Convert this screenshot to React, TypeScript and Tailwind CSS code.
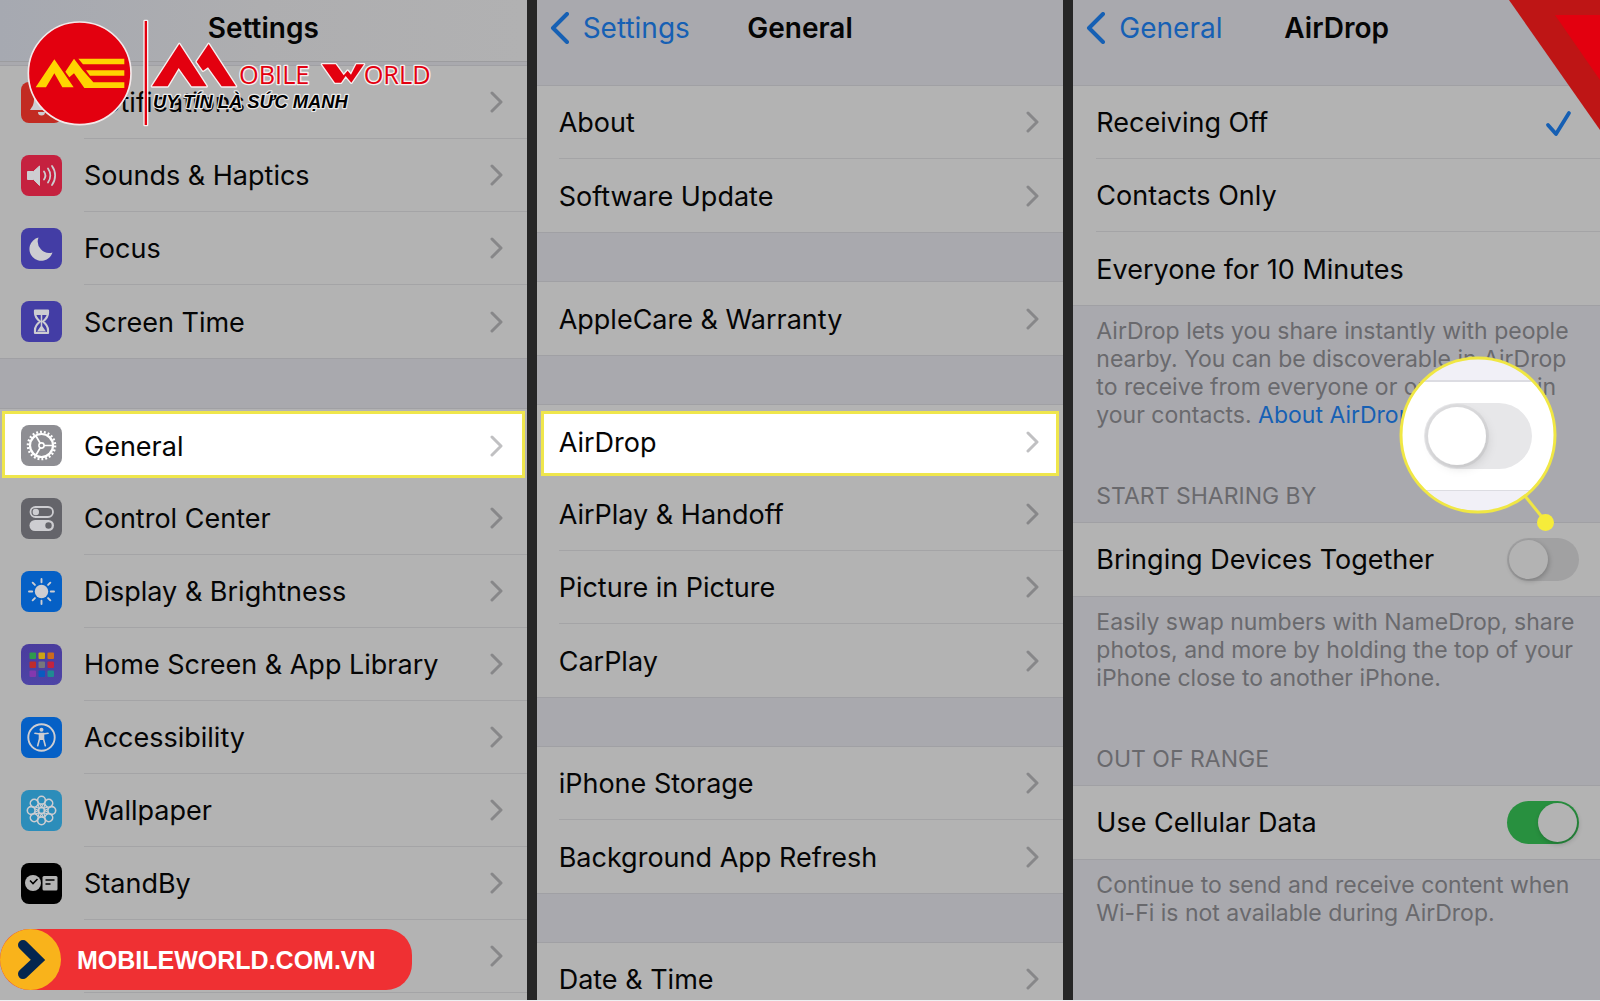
import { useState } from 'react'
import type { ReactNode } from 'react'

const GLYPH = '#cdcdd1'

function IconTile({ children, className }: { children?: ReactNode; className: string }) {
  return (
    <svg viewBox="0 0 41 41" className={`size-[41px] shrink-0 rounded-lg ${className}`} aria-hidden="true">
      {children}
    </svg>
  )
}

const BellIcon = () => (
  <IconTile className="bg-[#c22b22]">
    <path d="M20.5 8c-5 0-7.500 4-7.500 9 0 6-2 8-4 11h23c-2-3-4-5-4-11 0-5-2.500-9-7.500-9z" fill={GLYPH} />
    <path d="M17 30a3.500 3.500 0 0 0 7 0z" fill={GLYPH} />
  </IconTile>
)

const SoundsIcon = () => (
  <IconTile className="bg-[#c5213f]">
    <path d="M6.500 16.500h6L18.500 11v19.500l-6-6h-6z" fill={GLYPH} stroke={GLYPH} strokeLinejoin="round" />
    <g fill="none" stroke={GLYPH} strokeWidth="1.800" strokeLinecap="round">
      <path d="M23 16.500a7 7 0 0 1 0 8" />
      <path d="M27 13.500a12 12 0 0 1 0 14" />
      <path d="M31 11a16 16 0 0 1 0 19" />
    </g>
  </IconTile>
)

const FocusIcon = () => (
  <IconTile className="bg-[#433da5]">
    <path d="M17.500 9.500A11.800 11.800 0 1 0 31.500 24.500A11.500 11.500 0 0 1 17.500 9.500z" fill={GLYPH} />
  </IconTile>
)

const ScreenTimeIcon = () => (
  <IconTile className="bg-[#433da5]">
    <path
      d="M14 9.500h13v2.500c0 4-2 6-5 8.500 3 2.500 5 4.500 5 8.500v3H14v-3c0-4 2-6 5-8.500-3-2.500-5-4.500-5-8.500z"
      fill="none"
      stroke={GLYPH}
      strokeWidth="2.200"
      strokeLinejoin="round"
    />
    <path d="M14 9h13v5H14zM20.500 24l4.500 6.500h-9z" fill={GLYPH} />
    <path d="M20.500 14v11" stroke={GLYPH} strokeWidth="1.500" />
  </IconTile>
)

const GeneralIcon = () => (
  <IconTile className="bg-[#8e8e93]">
    <g fill="none" stroke="#fff">
      <circle cx="20.500" cy="20.500" r="11.500" strokeWidth="2.200" />
      <circle cx="20.500" cy="20.500" r="13.600" strokeWidth="2.400" strokeDasharray="1.900 1.987" />
      <circle cx="20.500" cy="20.500" r="2.600" strokeWidth="1.600" />
      <path d="M23 20.500h9M19.200 18.200L14.700 10.500M19.200 22.800l-4.500 7.700" strokeWidth="1.700" />
    </g>
  </IconTile>
)

const ControlIcon = () => (
  <IconTile className="bg-[#64646a]">
    <rect x="9.500" y="9" width="22.500" height="10" rx="5" fill="none" stroke={GLYPH} strokeWidth="1.800" />
    <circle cx="14.800" cy="14" r="3.200" fill={GLYPH} />
    <rect x="8.500" y="22" width="24.500" height="11" rx="5.500" fill={GLYPH} />
    <circle cx="27.500" cy="27.500" r="3.200" fill="#64646a" />
  </IconTile>
)

const DisplayIcon = () => (
  <IconTile className="bg-[#0560c6]">
    <circle cx="20.500" cy="20.500" r="6.700" fill={GLYPH} />
    <g stroke={GLYPH} strokeWidth="1.900" strokeLinecap="round">
      {[0, 45, 90, 135, 180, 225, 270, 315].map(angle => (
        <path key={angle} d="M20.500 11.200V8" transform={`rotate(${angle} 20.500 20.500)`} />
      ))}
    </g>
  </IconTile>
)

const homeTiles = ['#2f9a4d', '#cca314', '#cb6a1d', '#bf2c2c', '#77777c', '#c2233f', '#8438ae', '#0a5bc0', '#1f8b92']

const HomeIcon = () => (
  <IconTile className="bg-linear-to-b from-[#4a3c9d] to-[#4d44a6]">
    {homeTiles.map((fill, i) => (
      <rect key={fill} x={8.5 + (i % 3) * 9} y={8.5 + Math.floor(i / 3) * 9} width="6.500" height="6.500" rx="1" fill={fill} />
    ))}
  </IconTile>
)

const AccessibilityIcon = () => (
  <IconTile className="bg-[#0560c6]">
    <circle cx="20.500" cy="20.500" r="13.200" fill="none" stroke={GLYPH} strokeWidth="1.900" />
    <circle cx="20.500" cy="12.800" r="2" fill={GLYPH} />
    <path d="M14 16.300q6.500 1.400 13 0" fill="none" stroke={GLYPH} strokeWidth="1.600" strokeLinecap="round" />
    <path d="M18.500 16.500h4v5.500l1.800 6.800M18.500 16.500v5.500l-1.800 6.800" fill="none" stroke={GLYPH} strokeWidth="1.600" strokeLinecap="round" />
    <path d="M18.200 16.500h4.600v6.500h-4.600z" fill={GLYPH} />
  </IconTile>
)

const WallpaperIcon = () => (
  <IconTile className="bg-[#2c8dba]">
    <g fill="none" stroke={GLYPH} strokeWidth="1.600">
      {[0, 45, 90, 135, 180, 225, 270, 315].map(angle => (
        <g key={angle} transform={`rotate(${angle} 20.500 20.500)`}>
          <circle cx="20.500" cy="10.200" r="3.900" />
          <path d="M18.500 13.500l2 4 2-4" strokeWidth="1.200" />
        </g>
      ))}
      <circle cx="20.500" cy="20.500" r="3" />
    </g>
  </IconTile>
)

const StandByIcon = () => (
  <IconTile className="bg-black">
    <circle cx="12" cy="20" r="8" fill="#b4b4b4" />
    <path d="M9 17.500l3 3 4.500-4.500" fill="none" stroke="#000" strokeWidth="1.600" />
    <rect x="21.500" y="13" width="15" height="14.500" rx="1.500" fill="#b4b4b4" />
    <path d="M24.500 17h9M24.500 21h5" stroke="#000" strokeWidth="1.500" />
  </IconTile>
)

function Chevron({ bright = false }: { bright?: boolean }) {
  return (
    <svg viewBox="0 0 13 22" className="h-[22px] w-[13px] shrink-0" aria-hidden="true">
      <path
        d="M2 2l9 9-9 9"
        fill="none"
        stroke={bright ? '#c0c0c2' : '#878789'}
        strokeWidth="3"
        strokeLinecap="round"
        strokeLinejoin="round"
      />
    </svg>
  )
}

type RowProps = {
  label: string
  icon?: ReactNode
  // position of the bright call-out box inside the row
  highlight?: string
  last?: boolean
}

function Row({ label, icon, highlight, last }: RowProps) {
  return (
    <li className="relative">
      {highlight && <span className={`absolute border-3 border-[#efe64c] bg-white ${highlight}`} />}
      <button type="button" className={`relative flex h-[73px] w-full items-center gap-[22px] text-left ${icon ? 'pl-[21px]' : 'pl-[22px]'}`}>
        {icon}
        <span
          className={`flex h-full flex-1 items-center justify-between pr-6 ${
            last || highlight ? '' : 'border-b border-[#a4a4a6]'
          }`}
        >
          <span className="pt-0.5">{label}</span>
          <Chevron bright={!!highlight} />
        </span>
      </button>
    </li>
  )
}

function Panel({ children }: { children: ReactNode }) {
  return <div className="relative bg-[#b3b3b3] shadow-[0_1px_#a0a0a4,0_-1px_#a0a0a4]">{children}</div>
}

function Group({ children }: { children: ReactNode }) {
  return (
    <Panel>
      <ul>{children}</ul>
    </Panel>
  )
}

function NavBar({ back, title }: { back?: string; title: string }) {
  return (
    <header className="grid h-14 grid-cols-[1fr_auto_1fr] items-center text-[28px]">
      <div>
        {back && (
          <a href="#" className="flex items-center gap-3.5 pl-[13px] text-[#1660b4]">
            <svg viewBox="0 0 19 32" className="h-8 w-[19px]" aria-hidden="true">
              <path d="M17 2L3 16l14 14" fill="none" stroke="currentColor" strokeWidth="4" strokeLinecap="round" strokeLinejoin="round" />
            </svg>
            {back}
          </a>
        )}
      </div>
      <h1 className="font-semibold">{title}</h1>
      <div />
    </header>
  )
}

function SettingsScreen() {
  return (
    <section className="bg-[#a9a9ae]">
      <div className="h-[62px] border-b border-[#9c9c9f] bg-linear-to-r from-[#a6a9b1] via-[#aeaeb0] to-[#b1b1b2]">
        <NavBar title="Settings" />
      </div>
      <div className="flex flex-col gap-[51px] pt-1">
        <Group>
          <Row icon={<BellIcon />} label="Notifications" />
          <Row icon={<SoundsIcon />} label="Sounds & Haptics" />
          <Row icon={<FocusIcon />} label="Focus" />
          <Row icon={<ScreenTimeIcon />} label="Screen Time" last />
        </Group>
        <Group>
          <Row icon={<GeneralIcon />} label="General" highlight="inset-x-0.5 top-0.5 bottom-1" />
          <Row icon={<ControlIcon />} label="Control Center" />
          <Row icon={<DisplayIcon />} label="Display & Brightness" />
          <Row icon={<HomeIcon />} label="Home Screen & App Library" />
          <Row icon={<AccessibilityIcon />} label="Accessibility" />
          <Row icon={<WallpaperIcon />} label="Wallpaper" />
          <Row icon={<StandByIcon />} label="StandBy" />
          <Row icon={<IconTile className="bg-[#0560c6]" />} label="" />
          <Row label="" last />
        </Group>
      </div>
    </section>
  )
}

function GeneralScreen() {
  return (
    <section className="bg-[#a9a9ae]">
      <NavBar back="Settings" title="General" />
      <div className="flex flex-col gap-[50px] pt-[30px]">
        <Group>
          <Row label="About" />
          <Row label="Software Update" last />
        </Group>
        <Group>
          <Row label="AppleCare & Warranty" last />
        </Group>
        <Group>
          <Row label="AirDrop" highlight="inset-x-1 top-1.5 bottom-0.5" />
          <Row label="AirPlay & Handoff" />
          <Row label="Picture in Picture" />
          <Row label="CarPlay" last />
        </Group>
        <Group>
          <Row label="iPhone Storage" />
          <Row label="Background App Refresh" last />
        </Group>
        <Group>
          <Row label="Date & Time" />
        </Group>
      </div>
    </section>
  )
}

function Toggle({ label, checked, onChange }: { label: string; checked: boolean; onChange: (v: boolean) => void }) {
  return (
    <label className="flex h-[73px] items-center justify-between pr-[21px] pl-[23px]">
      {label}
      <input
        type="checkbox"
        checked={checked}
        onChange={e => onChange(e.target.checked)}
        className="flex h-[43px] w-[72px] appearance-none items-center rounded-full bg-[#a1a1a2] px-[2px] before:size-[39px] before:rounded-full before:bg-[#b3b3b3] before:shadow-[1px_2px_5px_#00000038] checked:justify-end checked:bg-[#28903f]"
      />
    </label>
  )
}

const receivingOptions = ['Receiving Off', 'Contacts Only', 'Everyone for 10 Minutes']

function Note({ children }: { children: ReactNode }) {
  return <p className="pt-3 pr-6 pl-[23px] text-[23px]/[28px] text-[#69696d]">{children}</p>
}

function SectionTitle({ children }: { children: ReactNode }) {
  return <h2 className="pt-[53px] pb-[13px] pl-[23px] text-[23px]/[28px] text-[#69696d]">{children}</h2>
}

// Zoomed view of the off switch, with a pointer down to the real one
function Magnifier() {
  return (
    <svg viewBox="0 0 164 180" className="absolute right-[41px] bottom-[63px] h-[180px] w-[164px]" aria-hidden="true">
      <defs>
        <clipPath id="lens">
          <circle cx="83" cy="82" r="77" />
        </clipPath>
        <filter id="knob" x="-30%" y="-30%" width="160%" height="160%">
          <feDropShadow dx="3" dy="4" stdDeviation="4" floodOpacity="0.1" />
        </filter>
      </defs>
      <path d="M130 143l21 26" stroke="#efe544" strokeWidth="3" />
      <circle cx="150.500" cy="169.500" r="8.500" fill="#f6ec3a" />
      <g clipPath="url(#lens)">
        <rect width="164" height="164" fill="#f1f0f7" />
        <rect y="27" width="164" height="111" fill="#dcdce2" />
        <rect y="29" width="164" height="108" fill="#fff" />
        <rect x="29" y="50" width="108" height="66" rx="33" fill="#e7e7e9" />
        <circle cx="62" cy="83" r="32" fill="#dcdcde" />
        <circle cx="62" cy="83" r="29" fill="#fff" filter="url(#knob)" />
      </g>
      <circle cx="83" cy="82" r="77" fill="none" stroke="#f0e744" strokeWidth="3" />
    </svg>
  )
}

function AirDropScreen() {
  const [receiving, setReceiving] = useState(receivingOptions[0])
  const [bringing, setBringing] = useState(false)
  const [cellular, setCellular] = useState(true)

  return (
    <section className="bg-[#a9a9ae]">
      <NavBar back="General" title="AirDrop" />
      <div className="pt-[30px]">
        <Group>
          {receivingOptions.map(option => (
            <li key={option} className="group pl-[23px]">
              <label className="flex h-[73px] items-center justify-between border-b border-[#a4a4a6] pt-0.5 pr-7 group-last:border-b-0">
                <input
                  type="radio"
                  name="receiving"
                  className="sr-only"
                  checked={receiving === option}
                  onChange={() => setReceiving(option)}
                />
                {option}
                {receiving === option && (
                  <svg viewBox="0 0 27 27" className="size-[27px]" aria-hidden="true">
                    <path d="M3 15l8 9L24 3" fill="none" stroke="#165fb3" strokeWidth="3.800" strokeLinecap="round" strokeLinejoin="round" />
                  </svg>
                )}
              </label>
            </li>
          ))}
        </Group>
        <Note>
          AirDrop lets you share instantly with people nearby. You can be discoverable in AirDrop to receive from everyone or only people in your contacts.{' '}
          <a href="#" className="text-[#1660b4]">About AirDrop</a>
        </Note>
        <SectionTitle>START SHARING BY</SectionTitle>
        <Panel>
          <Toggle label="Bringing Devices Together" checked={bringing} onChange={setBringing} />
          <Magnifier />
        </Panel>
        <Note>Easily swap numbers with NameDrop, share photos, and more by holding the top of your iPhone close to another iPhone.</Note>
        <SectionTitle>OUT OF RANGE</SectionTitle>
        <Panel>
          <Toggle label="Use Cellular Data" checked={cellular} onChange={setCellular} />
        </Panel>
        <Note>Continue to send and receive content when Wi-Fi is not available during AirDrop.</Note>
      </div>
    </section>
  )
}

function BrandLogo() {
  return (
    <svg viewBox="0 0 1290 360" className="absolute top-[18px] left-[25px] h-[120px] w-[430px]" role="img" aria-label="Mobile World">
      <circle cx="164" cy="166" r="154" fill="#e3000f" stroke="#f3e9ea" strokeWidth="5" />
      <g fill="#ffd400">
        <path d="M32 208L88 124L146 208H112L88 166L63 208z" />
        <path d="M121 161L147 122L172 155L205 193H298V210H178L147 166L133 178z" />
        <path d="M160 122H298V139H174z" />
        <path d="M183 157H298V173H195z" />
      </g>
      <g stroke="#f6f0f0" strokeWidth="8" strokeLinejoin="round" fill="#e3000f" style={{ paintOrder: 'stroke' }}>
        <path d="M359 9h7v312h-7z" />
        <path d="M381 205L463 78L545 205H500L461 150L428 205z" />
        <path d="M515 131L551 78L633 205H590L549 148L534 158z" />
        <path d="M891 139H932L956 172L968 158L978 170L994 139H1017L979 194L962 174L948 194H930z" />
      </g>
      <g
        stroke="#f6f0f0"
        strokeWidth="8"
        strokeLinejoin="round"
        fill="#e3000f"
        fontSize="76"
        style={{ paintOrder: 'stroke', fontFamily: '"Liberation Sans Narrow", "Open Sans", sans-serif' }}
      >
        <text x="642" y="197">OBILE</text>
        <text x="1016" y="197">ORLD</text>
      </g>
      <text
        x="384"
        y="271"
        fontSize="55"
        fontWeight="700"
        fontStyle="italic"
        stroke="#ececec"
        strokeWidth="7"
        strokeLinejoin="round"
        style={{ paintOrder: 'stroke', fontFamily: '"Liberation Sans", sans-serif' }}
      >
        UY TÍN LÀ SỨC MẠNH
      </text>
    </svg>
  )
}

function SiteBanner() {
  return (
    <a
      href="#"
      className="absolute bottom-2.5 left-0 flex h-[61px] w-[412px] items-center rounded-l-[30px] rounded-r-[26px] bg-[#ef3033] font-['Liberation_Sans',sans-serif] text-[25px] font-bold text-white"
    >
      <svg viewBox="0 0 61 61" className="size-[61px]" aria-hidden="true">
        <circle cx="30.500" cy="30.500" r="30.500" fill="#f9b31b" />
        <path d="M23 16l15 15-15 14" fill="none" stroke="#04264f" strokeWidth="10" strokeLinecap="round" />
      </svg>
      <span className="pl-4">MOBILEWORLD.COM.VN</span>
    </a>
  )
}

function App() {
  return (
    <div className="h-screen overflow-hidden bg-[#eef0f2] pb-px font-[Inter,sans-serif] text-[27px]/[34px] text-[#050505]">
      <main className="relative h-full overflow-hidden">
        <div className="grid h-full grid-cols-3 gap-[10px] bg-[#262626]">
          <SettingsScreen />
          <GeneralScreen />
          <AirDropScreen />
        </div>
        <BrandLogo />
        <svg viewBox="0 0 91 130" className="absolute top-0 right-0 h-[130px] w-[91px]" aria-hidden="true">
          <path d="M0 0H91V130z" fill="#be1515" />
          <path d="M46 15H91V80z" fill="#e3000f" />
        </svg>
        <SiteBanner />
      </main>
    </div>
  )
}

export default App
